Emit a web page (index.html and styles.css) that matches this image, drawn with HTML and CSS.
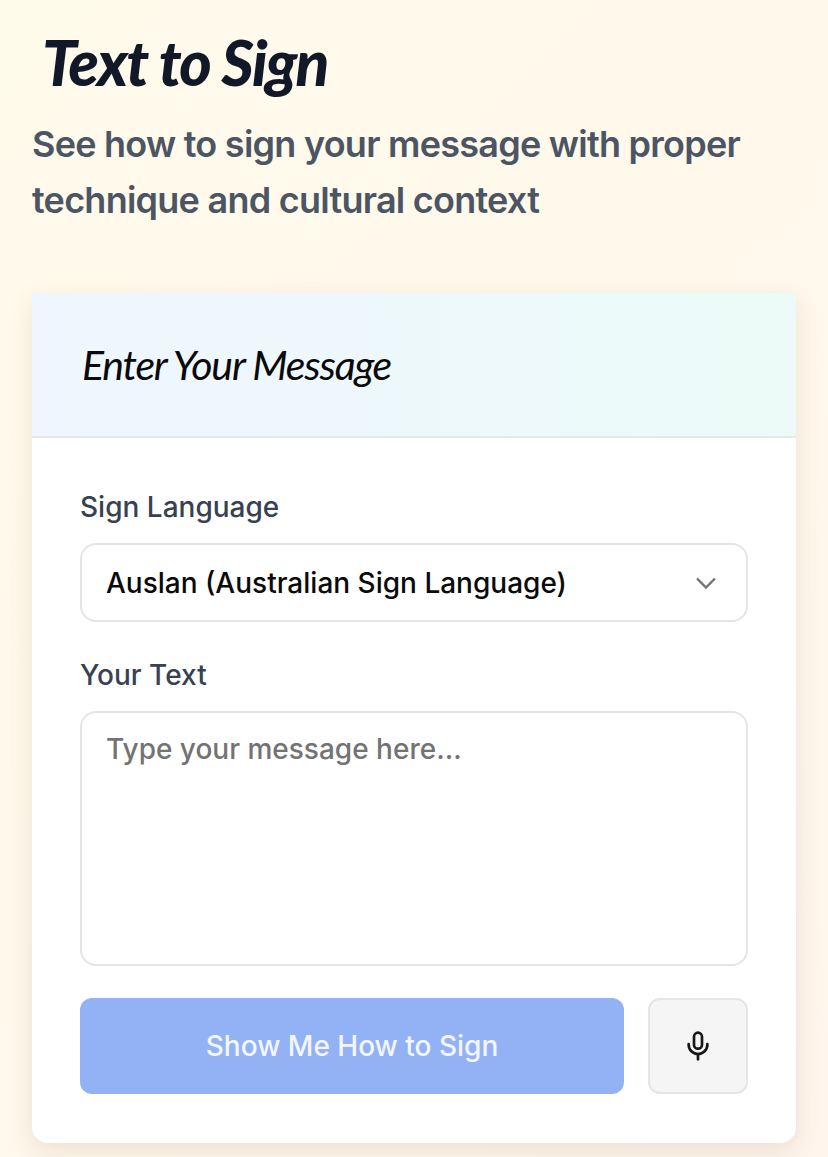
FILE: index.html

```html
<!DOCTYPE html>
<html lang="en">
<head>
    <meta charset="UTF-8">
    <meta name="viewport" content="width=device-width, initial-scale=1.0">
    <title>Text to Sign</title>
    <link rel="stylesheet" href="styles.css">
</head>
<body>
    <div class="page">
        <h1 class="page-title">Text to Sign</h1>
        <p class="page-subtitle">See how to sign your message with proper technique and cultural context</p>

        <div class="card">
            <div class="card-header">
                <h2 class="card-title">Enter Your Message</h2>
            </div>
            <div class="card-body">
                <div class="label">Sign Language</div>
                <div class="select">
                    <span>Auslan (Australian Sign Language)</span>
                    <svg class="chevron" width="24" height="24" viewBox="0 0 24 24" fill="none" stroke="#737373" stroke-width="2.4">
                        <path d="M3 7.5l9 9 9-9"/>
                    </svg>
                </div>

                <div class="label label-text">Your Text</div>
                <div class="textarea">Type your message here...</div>

                <div class="actions">
                    <div class="submit">Show Me How to Sign</div>
                    <div class="mic">
                        <svg width="32" height="32" viewBox="0 0 24 24" fill="none" stroke="#171717" stroke-width="2" stroke-linecap="round">
                            <rect x="9" y="2" width="6" height="12" rx="3"/>
                            <path d="M5 10.5v.5a7 7 0 0 0 14 0v-.5"/>
                            <path d="M12 18v4"/>
                        </svg>
                    </div>
                </div>
            </div>
        </div>
    </div>
</body>
</html>
```

FILE: styles.css

```css
* {
    box-sizing: border-box;
}

body {
    margin: 0;
    font-family: 'Inter', 'Liberation Sans', sans-serif;
    background: linear-gradient(135deg, #fffbeb 0%, #fff5ec 100%);
    height: 1157px;
    overflow: hidden;
}

.page {
    padding: 24px 32px 0;
}

.page-title {
    margin: 0;
    padding-left: 10px;
    font-family: 'Lato', sans-serif;
    font-style: italic;
    font-weight: 900;
    font-size: 62px;
    line-height: 76px;
    letter-spacing: -1.75px;
    color: #111827;
}

.page-subtitle {
    margin: 16px 0 65px;
    font-size: 36px;
    line-height: 56px;
    font-weight: 600;
    letter-spacing: -0.75px;
    color: #4b5563;
}

.card {
    background: #fff;
    border-radius: 0 0 16px 16px;
    box-shadow: 0 8px 24px rgba(120, 90, 60, 0.14);
    overflow: hidden;
}

.card-header {
    height: 145px;
    padding: 0 50px;
    display: flex;
    align-items: center;
    background: linear-gradient(90deg, #eff6ff 0%, #ecfbf8 100%);
    border-bottom: 2px solid #e5e7eb;
}

.card-title {
    margin: 0;
    font-family: 'Lato', sans-serif;
    font-style: italic;
    font-weight: 400;
    font-size: 41px;
    letter-spacing: -1.2px;
    color: #0a0a0a;
}

.card-body {
    padding: 47px 48px 49px;
}

.label {
    font-size: 28px;
    line-height: 48px;
    font-weight: 500;
    color: #374151;
    margin-top: -2px;
}

.label-text {
    margin-top: 29px;
}

.select {
    margin-top: 12px;
    height: 79px;
    padding: 0 28px 0 24px;
    display: flex;
    align-items: center;
    justify-content: space-between;
    border: 2px solid #e5e5e5;
    border-radius: 16px;
    font-size: 28px;
    font-weight: 500;
    color: #0a0a0a;
}

.textarea {
    margin-top: 12px;
    height: 255px;
    padding: 16px 24px;
    border: 2px solid #e5e5e5;
    border-radius: 16px;
    font-size: 28px;
    line-height: 40px;
    font-weight: 500;
    color: #737373;
}

.actions {
    margin-top: 32px;
    display: flex;
    gap: 24px;
}

.submit {
    flex: 1;
    height: 96px;
    display: flex;
    align-items: center;
    justify-content: center;
    background: #93b2f5;
    border-radius: 12px;
    font-size: 28px;
    font-weight: 500;
    color: #f3f6fe;
}

.mic {
    width: 100px;
    height: 96px;
    display: flex;
    align-items: center;
    justify-content: center;
    background: #f5f5f5;
    border: 2px solid #e5e5e5;
    border-radius: 12px;
}
```
